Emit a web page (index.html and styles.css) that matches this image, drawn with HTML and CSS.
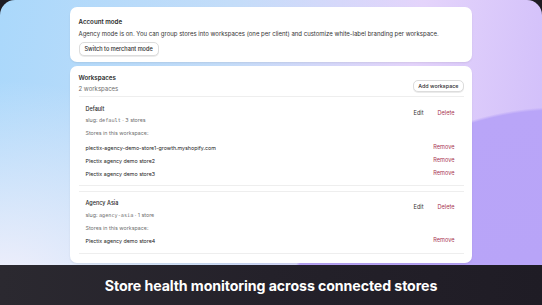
FILE: index.html
```html
<!DOCTYPE html>
<html lang="en">
<head>
    <meta charset="UTF-8">
    <title>Workspaces</title>
    <link rel="stylesheet" href="styles.css">
</head>
<body>
    <div class="stage">
        <div class="app">
            <div class="card">
                <h2 class="card-title">Account mode</h2>
                <p class="text">Agency mode is on. You can group stores into workspaces (one per client) and customize white-label branding per workspace.</p>
                <button class="btn">Switch to merchant mode</button>
            </div>

            <div class="card card-workspaces">
                <div class="ws-header">
                    <div>
                        <h2 class="card-title">Workspaces</h2>
                        <div class="muted">2 workspaces</div>
                    </div>
                    <button class="btn">Add workspace</button>
                </div>

                <div class="ws-item">
                    <div class="ws-top">
                        <div>
                            <div class="ws-name">Default</div>
                            <div class="slug">slug: <code>default</code> · 3 stores</div>
                        </div>
                        <div class="actions">
                            <span class="link">Edit</span>
                            <span class="link danger">Delete</span>
                        </div>
                    </div>
                    <div class="stores-label">Stores in this workspace:</div>
                    <div class="store-row">
                        <span>plectix-agency-demo-store1-growth.myshopify.com</span>
                        <span class="link danger">Remove</span>
                    </div>
                    <div class="store-row">
                        <span>Plectix agency demo store2</span>
                        <span class="link danger">Remove</span>
                    </div>
                    <div class="store-row">
                        <span>Plectix agency demo store3</span>
                        <span class="link danger">Remove</span>
                    </div>
                </div>

                <div class="ws-item last">
                    <div class="ws-top">
                        <div>
                            <div class="ws-name">Agency Asia</div>
                            <div class="slug">slug: <code>agency-asia</code> · 1 store</div>
                        </div>
                        <div class="actions">
                            <span class="link">Edit</span>
                            <span class="link danger">Delete</span>
                        </div>
                    </div>
                    <div class="stores-label">Stores in this workspace:</div>
                    <div class="store-row">
                        <span>Plectix agency demo store4</span>
                        <span class="link danger">Remove</span>
                    </div>
                </div>
            </div>
        </div>
    </div>
    <div class="caption">Store health monitoring across connected stores</div>
</body>
</html>
```

FILE: styles.css
```css
html, body {
    margin: 0;
    padding: 0;
}
body {
    width: 542px;
    height: 305px;
    overflow: hidden;
    background-color: #1e1c23;
    font-family: Inter, "Noto Sans", sans-serif;
    color: #303030;
}
.stage {
    height: 265px;
    box-sizing: border-box;
    padding: 7px 0 3px;
    border-radius: 15px 15px 0 0;
    display: flex;
    justify-content: center;
    background:
        radial-gradient(circle 300px at 560px 407px, #b7a3f8 0%, #b9a5f8 99%, rgba(185,165,248,0) 100%),
        radial-gradient(ellipse 260px 220px at 0px 300px, #f6f1fb 0%, rgba(246,241,251,0) 100%),
        linear-gradient(100deg, #aad8fb 0%, #c4ddf9 40%, #e4d4fb 72%, #cfbcfa 100%);
}
.app {
    width: 402px;
    margin-left: -1px;
    display: flex;
    flex-direction: column;
    gap: 4px;
}
.card {
    background-color: #fff;
    border-radius: 7px;
    padding: 10px 8px 6px 9px;
    box-shadow: 0 1px 2px rgba(0,0,0,0.08);
}
.card-title {
    margin: 0;
    font-size: 6.2px;
    font-weight: 600;
    line-height: 10px;
    color: #2b2b2b;
}
.text {
    margin: 2px 0 3px;
    font-size: 6px;
    line-height: 10px;
    color: #333;
}
.btn {
    display: block;
    font-family: inherit;
    font-size: 5.6px;
    font-weight: 500;
    color: #2b2b2b;
    background-color: #fff;
    border: 1px solid #dcdcdc;
    border-radius: 5px;
    padding: 0 5px;
    height: 14px;
    box-shadow: 0 1px 0 rgba(0,0,0,0.08);
}
.card-workspaces {
    flex: 1;
    padding-top: 7px;
    padding-bottom: 9px;
}
.ws-header {
    display: flex;
    justify-content: space-between;
    align-items: center;
    padding-bottom: 1px;
}
.ws-header .btn {
    height: 12px;
    padding: 0 4px;
    font-size: 5.4px;
    margin-top: 3px;
}
.muted {
    font-size: 6px;
    line-height: 12px;
    color: #6d6d6d;
}
.ws-item {
    margin-bottom: 5px;
    padding: 7px 9px 4px 7px;
    border-top: 1px solid #eeeeee;
    border-bottom: 1px solid #eeeeee;
}
.ws-item .stores-label {
    margin-bottom: 2px;
}
.ws-item.last {
    margin-bottom: 0;
    padding-top: 6px;
    padding-bottom: 5px;
}
.ws-item.last .slug {
    margin-top: 1px;
}
.ws-item.last .stores-label {
    margin-bottom: 0;
}
.ws-top {
    display: flex;
    justify-content: space-between;
    align-items: flex-start;
}
.ws-name {
    font-size: 5.5px;
    font-weight: 500;
    line-height: 10px;
    color: #2b2b2b;
}
.slug {
    font-size: 5.3px;
    line-height: 12px;
    color: #6d6d6d;
}
.slug code {
    font-family: "DejaVu Sans Mono", monospace;
    font-size: 5.2px;
}
.actions {
    display: flex;
    gap: 14px;
    padding-top: 4px;
}
.link {
    font-size: 5.6px;
    line-height: 10px;
    color: #333;
}
.danger {
    color: #a8324f;
}
.stores-label {
    font-size: 5.3px;
    line-height: 14px;
    color: #707070;
}
.store-row {
    display: flex;
    justify-content: space-between;
    font-size: 5.3px;
    line-height: 13px;
    color: #222;
}
.store-row .link {
    font-size: 5.6px;
}
.caption {
    height: 40px;
    display: flex;
    align-items: center;
    justify-content: center;
    background: linear-gradient(90deg, #2b2930 0%, #24212a 50%, #1f1c25 100%);
    color: #fff;
    font-size: 14.2px;
    font-weight: 700;
    letter-spacing: -0.1px;
}
```
